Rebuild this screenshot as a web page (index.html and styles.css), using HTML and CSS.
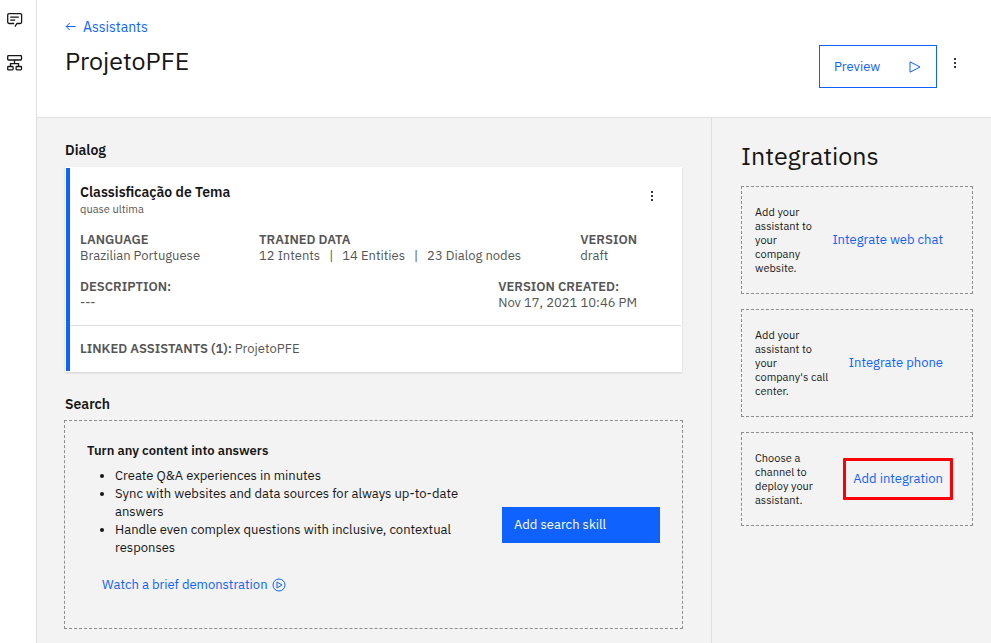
FILE: index.html
```html
<!DOCTYPE html>
<html lang="en">
<head>
<meta charset="utf-8">
<meta name="viewport" content="width=device-width, initial-scale=1">
<title>ProjetoPFE</title>
<link rel="stylesheet" href="styles.css">
</head>
<body>
<div class="app">
  <nav class="rail" aria-label="Main">
    <a href="#assistants" aria-label="Assistants">
      <svg width="16" height="16" viewBox="0 0 16 16" fill="none" stroke="currentColor" stroke-width="1.3"><path d="M7.2 11.5H2A1.4 1.4 0 0 1 .7 10.1V3A1.4 1.4 0 0 1 2 1.6h11.2A1.4 1.4 0 0 1 14.6 3v7.1a1.4 1.4 0 0 1-1.4 1.4H10L7.9 14.6M3.2 5.2h8.6M3.2 8.2h5"/></svg>
    </a>
    <a href="#skills" aria-label="Skills">
      <svg width="16" height="18" viewBox="0 0 16 18" fill="none" stroke="currentColor" stroke-width="1.3"><rect x=".7" y="1.6" width="13.8" height="4.4" rx=".8"/><path d="M7.5 6v3.6M3.5 12.5V9.6h8v2.9"/><rect x=".7" y="12.5" width="5.4" height="3.4" rx=".8"/><rect x="9.1" y="12.5" width="5.4" height="3.4" rx=".8"/></svg>
    </a>
  </nav>
  <div class="page">
    <header class="header">
      <div class="titles">
        <a class="back" href="#assistants"><svg width="12" height="10" viewBox="0 0 12 10" fill="none" stroke="currentColor"><path d="M10.5 4.5H1.2M4.7 1 1.2 4.5 4.7 8"/></svg>Assistants</a>
        <h1>ProjetoPFE</h1>
      </div>
      <div class="actions">
        <button class="preview" type="button">Preview<svg width="12" height="12" viewBox="0 0 12 12" fill="none" stroke="currentColor" stroke-linejoin="round"><path d="M1 .8v10.4L11 6Z"/></svg></button>
        <button class="more" type="button" aria-label="Assistant options"><svg width="4" height="10" viewBox="0 0 4 10"><path d="M1 0h2v2H1zM1 4h2v2H1zM1 8h2v2H1z"/></svg></button>
      </div>
    </header>
    <div class="content">
      <main class="skills">
        <h2>Dialog</h2>
        <article class="card">
          <div class="card-body">
            <div class="card-head">
              <div>
                <h3>Classisficação de Tema</h3>
                <p class="sub">quase ultima</p>
              </div>
              <button class="more" type="button" aria-label="Skill options"><svg width="4" height="10" viewBox="0 0 4 10"><path d="M1 0h2v2H1zM1 4h2v2H1zM1 8h2v2H1z"/></svg></button>
            </div>
            <dl class="facts">
              <div class="language"><dt>LANGUAGE</dt><dd>Brazilian Portuguese</dd></div>
              <div class="trained"><dt>TRAINED DATA</dt><dd class="counts"><span>12 Intents</span><span>|</span><span>14 Entities</span><span>|</span><span>23 Dialog nodes</span></dd></div>
              <div><dt>VERSION</dt><dd>draft</dd></div>
            </dl>
            <dl class="facts">
              <div><dt>DESCRIPTION:</dt><dd>---</dd></div>
              <div><dt>VERSION CREATED:</dt><dd>Nov 17, 2021 10:46 PM</dd></div>
            </dl>
          </div>
          <p class="linked"><strong>LINKED ASSISTANTS (1):</strong> ProjetoPFE</p>
        </article>
        <h2>Search</h2>
        <section class="search">
          <div class="pitch">
            <h3>Turn any content into answers</h3>
            <ul>
              <li>Create Q&amp;A experiences in minutes</li>
              <li>Sync with websites and data sources for always up-to-date answers</li>
              <li>Handle even complex questions with inclusive, contextual responses</li>
            </ul>
            <a class="watch" href="#demo">Watch a brief demonstration<svg width="14" height="14" viewBox="0 0 14 14" fill="none" stroke="currentColor" stroke-linejoin="round"><circle cx="7" cy="7" r="6"/><path d="M5 4v6l5-3Z"/></svg></a>
          </div>
          <button class="primary" type="button">Add search skill</button>
        </section>
      </main>
      <aside class="integrations">
        <h2>Integrations</h2>
        <section class="option"><p>Add your<br>assistant to<br>your<br>company<br>website.</p><a href="#web-chat">Integrate web chat</a></section>
        <section class="option"><p>Add your<br>assistant to<br>your<br>company's call<br>center.</p><a href="#phone">Integrate phone</a></section>
        <section class="option"><p>Choose a<br>channel to<br>deploy your<br>assistant.</p><a class="marked" href="#add">Add integration</a></section>
      </aside>
    </div>
  </div>
</div>
</body>
</html>
```
FILE: styles.css
```css
* { box-sizing: border-box; }
body, h1, h2, h3, p, ul, dl, dd { margin: 0; }
body {
  background: #f3f3f3;
  color: #161616;
  font: 13px/16px "IBM Plex Sans", Inter, sans-serif;
}
button { font: inherit; cursor: pointer; border-radius: 0; }
a { color: #0f62fe; text-decoration: none; }
svg { display: block; flex: none; }
.app { display: grid; grid-template-columns: 37px minmax(0, 1fr); min-height: 100vh; }
.rail {
  display: flex; flex-direction: column; gap: 26px;
  padding: 12px 0 0 7px;
  background: #fff; border-right: 1px solid #e0e0e0;
}
.rail a { color: #161616; }
.page { display: flex; flex-direction: column; }
.header {
  display: flex; justify-content: space-between;
  min-height: 118px; padding: 18px 30px 18px 28px;
  background: #fff; border-bottom: 1px solid #e0e0e0;
}
.back { display: flex; align-items: center; gap: 6px; font-size: 14px; line-height: 18px; }
h1, .integrations h2 { font-size: 25px; line-height: 32px; font-weight: 400; }
h1 { margin-top: 9px; }
.actions { display: flex; align-items: flex-start; gap: 12px; padding-top: 27px; }
.preview {
  display: flex; align-items: center; justify-content: space-between;
  width: 118px; height: 43px; padding: 0 15px 0 14px;
  background: #fff; border: 1px solid #0f62fe; color: #0f62fe;
}
.more { padding: 4px; border: 0; background: none; }
.more svg { fill: #393939; }
.actions .more { margin-top: 9px; }
.content { flex: 1; display: grid; grid-template-columns: minmax(0, 1fr) 280px; }
.skills { padding: 22px 28px 14px; }
.skills h2 { font-size: 14px; line-height: 20px; font-weight: 600; margin-bottom: 7px; }
.card {
  margin: 0 1px 22px 0; border: 1px solid #fff; border-left: 0;
  background: linear-gradient(#1062fe, #1062fe) 1px 0 / 4px 100% no-repeat #fff;
  box-shadow: 0 1px 2px rgba(0, 0, 0, .15);
}
.card-body { padding: 15px 44px 14px 15px; }
.card-head { display: flex; justify-content: space-between; }
.card-head .more { margin: 4px -21px 0 0; align-self: flex-start; }
.card h3 { font-size: 14px; line-height: 18px; font-weight: 600; }
.sub { font-size: 11px; color: #565656; }
.facts { display: flex; justify-content: space-between; color: #565656; margin-top: 15px; }
.facts dt, .linked strong { font-weight: 600; }
.language { flex: 0 0 179px; }
.trained { flex: 1; }
.counts { display: flex; gap: 9px; }
.linked { margin-left: 5px; padding: 15px 10px 14px; border-top: 1px solid #e0e0e0; color: #565656; }
.search {
  display: flex; align-items: flex-start; justify-content: space-between; gap: 20px;
  min-height: 209px; margin: -1px 0 0 -1px; padding: 21px 22px; border: 1px dashed #8d8d8d;
}
.pitch { flex: 0 1 390px; }
.pitch h3 { font-size: 13px; line-height: 18px; font-weight: 600; }
.pitch ul { margin: 7px 0 19px; padding-left: 28px; line-height: 18px; }
.watch { display: flex; align-items: center; gap: 4px; margin-left: 15px; line-height: 18px; }
.primary { flex: 0 0 158px; align-self: center; height: 36px; padding: 0 12px; text-align: left; background: #1062fe; border: 0; color: #fff; }
.integrations { padding: 22px 18px 22px 29px; border-left: 1px solid #e0e0e0; }
.integrations h2 { margin-bottom: 14px; }
.option {
  display: flex; align-items: center; justify-content: space-between;
  margin-bottom: 15px; padding: 18px 29px 18px 13px; border: 1px dashed #8d8d8d;
}
.option p { width: 76px; font-size: 11px; line-height: 14px; white-space: nowrap; }
.option a { white-space: nowrap; }
.option .marked {
  margin: 0 -10px; padding: 10px 7px;
  border: 3px solid #fa0007; border-radius: 1px;
}
```
